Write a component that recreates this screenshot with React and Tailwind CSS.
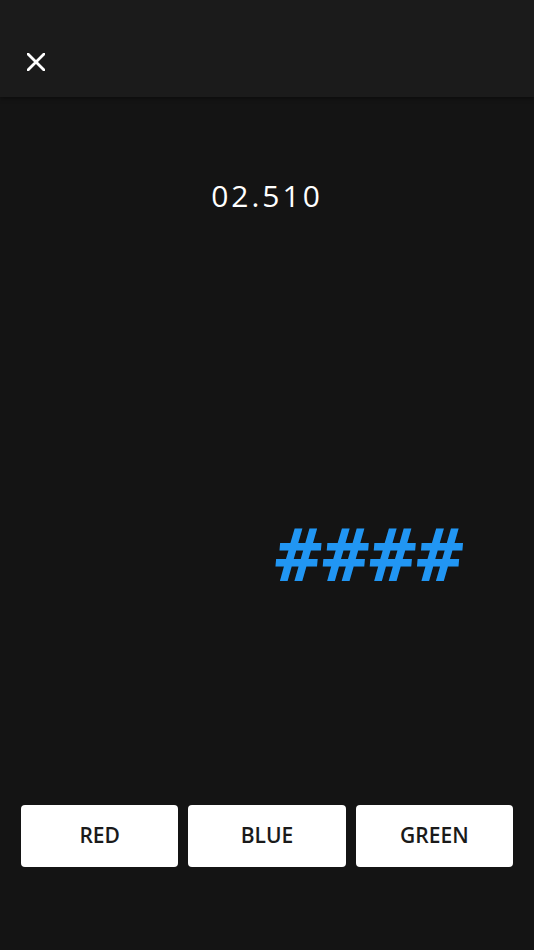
const choices = ['RED', 'BLUE', 'GREEN'];

export default function App() {
  return (
    <div
      className="flex h-[950px] w-[534px] flex-col bg-[#141414]"
      style={{ fontFamily: '"Open Sans", "Noto Sans", sans-serif' }}
    >
      <header className="relative z-10 flex h-[97px] shrink-0 items-start bg-[#1b1b1b] px-[27px] pt-[53px] shadow-[0_2px_4px_rgba(0,0,0,0.35)]">
        <button type="button" aria-label="Close" className="text-white">
          <svg width="18" height="18" viewBox="0 0 18 18" fill="none">
            <path d="M1 1L17 17M17 1L1 17" stroke="currentColor" strokeWidth="2.8" strokeLinecap="square" />
          </svg>
        </button>
      </header>

      <div className="flex justify-center pt-[84px]">
        <p className="text-[30px] leading-none tracking-[0.1em] text-white">02.510</p>
      </div>

      <div className="relative flex-1">
        <span className="absolute left-[274px] top-[305px] text-[73px] font-bold italic leading-none text-[#2196f3]">
          ####
        </span>
      </div>

      <div className="grid grid-cols-3 gap-[10px] px-[21px] pb-[83px]">
        {choices.map((c) => (
          <button
            key={c}
            type="button"
            className="flex h-[62px] items-center justify-center rounded-[4px] bg-white text-[21px] font-semibold text-[#1a1a1a]"
          >
            {c}
          </button>
        ))}
      </div>
    </div>
  );
}
